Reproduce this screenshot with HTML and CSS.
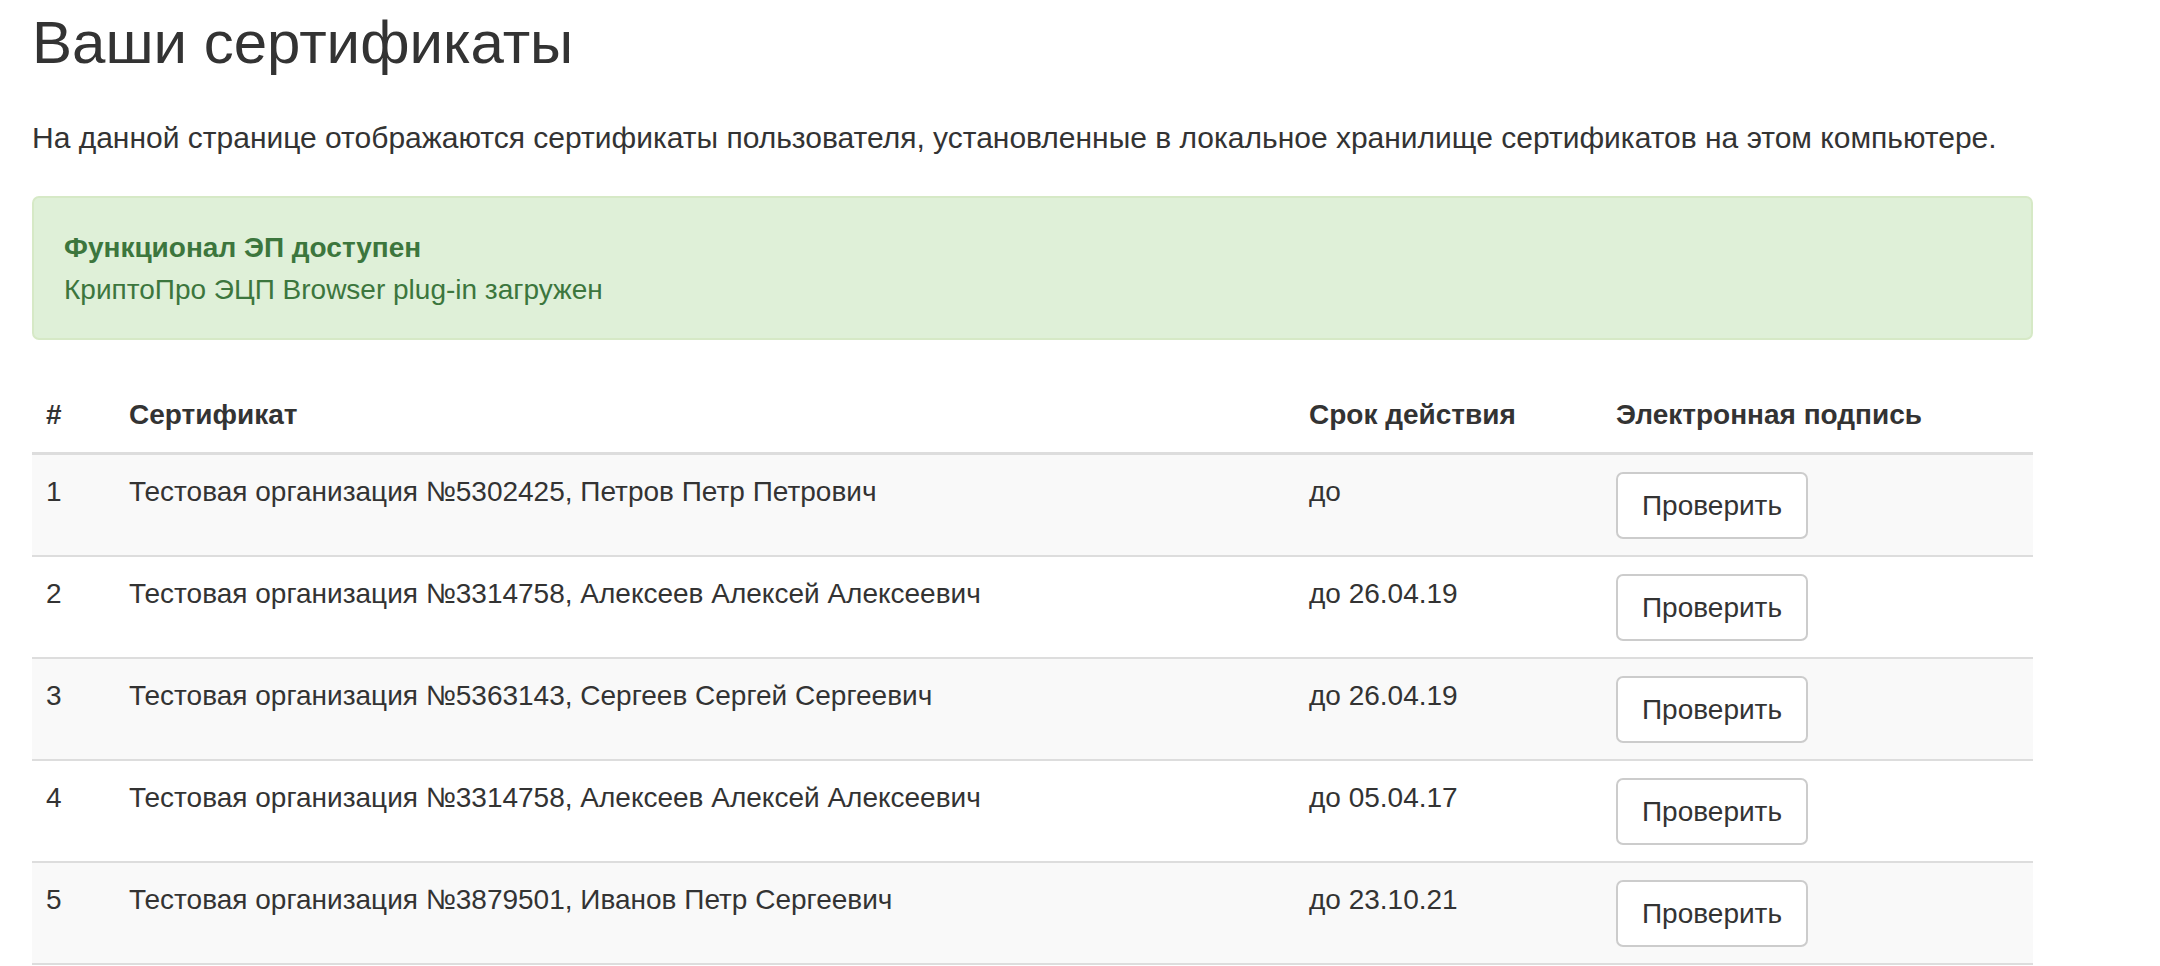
FILE: index.html
```html
<!DOCTYPE html>
<html lang="ru">
<head>
<meta charset="utf-8">
<title>Ваши сертификаты</title>
<link rel="stylesheet" href="styles.css">
</head>
<body>
<div class="container">
  <h1 class="title">Ваши сертификаты</h1>
  <p class="intro">На данной странице отображаются сертификаты пользователя, установленные в локальное хранилище сертификатов на этом компьютере.</p>
  <div class="alert">
    <div class="alert-title">Функционал ЭП доступен</div>
    <div class="alert-text">КриптоПро ЭЦП Browser plug-in загружен</div>
  </div>
  <table class="certs">
    <colgroup>
      <col class="c-num">
      <col class="c-cert">
      <col class="c-date">
      <col class="c-sign">
    </colgroup>
    <thead>
      <tr><th>#</th><th>Сертификат</th><th>Срок действия</th><th>Электронная подпись</th></tr>
    </thead>
    <tbody>
      <tr class="odd"><td>1</td><td>Тестовая организация №5302425, Петров Петр Петрович</td><td>до</td><td><button class="btn">Проверить</button></td></tr>
      <tr><td>2</td><td>Тестовая организация №3314758, Алексеев Алексей Алексеевич</td><td>до 26.04.19</td><td><button class="btn">Проверить</button></td></tr>
      <tr class="odd"><td>3</td><td>Тестовая организация №5363143, Сергеев Сергей Сергеевич</td><td>до 26.04.19</td><td><button class="btn">Проверить</button></td></tr>
      <tr><td>4</td><td>Тестовая организация №3314758, Алексеев Алексей Алексеевич</td><td>до 05.04.17</td><td><button class="btn">Проверить</button></td></tr>
      <tr class="odd"><td>5</td><td>Тестовая организация №3879501, Иванов Петр Сергеевич</td><td>до 23.10.21</td><td><button class="btn">Проверить</button></td></tr>
    </tbody>
  </table>
</div>
</body>
</html>
```

FILE: styles.css
```css
html, body {
  margin: 0;
  padding: 0;
  background: #fff;
}
body {
  font-family: "Liberation Sans", Arial, sans-serif;
  color: #333;
}
.container {
  width: 2001px;
  margin-left: 32px;
}
.title {
  margin: 10px 0 0;
  font-size: 60px;
  line-height: 66px;
  font-weight: normal;
  color: #333;
}
.intro {
  margin: 40px 0 0;
  font-size: 30px;
  line-height: 43px;
  white-space: nowrap;
}
.alert {
  margin-top: 37px;
  margin-bottom: 38px;
  padding: 29px 30px 27px;
  height: 84px;
  background: #dff0d8;
  border: 2px solid #d6e9c6;
  border-radius: 7px;
  color: #3c763d;
}
.alert-title {
  font-size: 28px;
  line-height: 42px;
  font-weight: bold;
}
.alert-text {
  font-size: 28px;
  line-height: 42px;
}
.certs {
  width: 2001px;
  table-layout: fixed;
  border-collapse: separate;
  border-spacing: 0;
  font-size: 28px;
  line-height: 40px;
}
.c-num { width: 83px; }
.c-cert { width: 1180px; }
.c-date { width: 307px; }
.c-sign { width: 431px; }
.certs th {
  text-align: left;
  vertical-align: bottom;
  font-weight: bold;
  padding: 17px 14px;
  border-bottom: 3px solid #ddd;
}
.certs td {
  vertical-align: top;
  padding: 17px 14px 16px;
  border-bottom: 2px solid #ddd;
}
.certs tr.odd td {
  background: #f9f9f9;
}
.btn {
  display: block;
  box-sizing: border-box;
  width: 192px;
  height: 67px;
  padding: 0;
  background: #fff;
  border: 2px solid #ccc;
  border-radius: 7px;
  font-family: "Liberation Sans", Arial, sans-serif;
  font-size: 28px;
  line-height: 40px;
  color: #333;
  text-align: center;
}
```
